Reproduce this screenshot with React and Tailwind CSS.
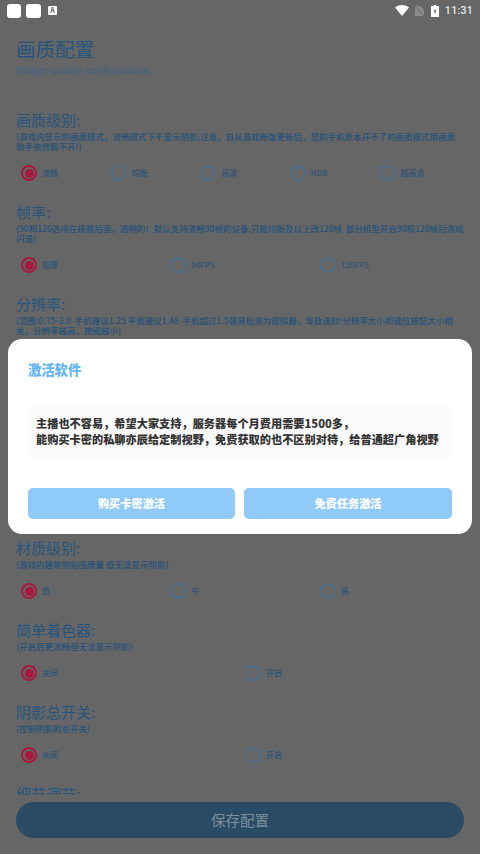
import React from 'react';

const sections = [
  {
    title: '画质级别:',
    desc: '(游戏内显示的画质模式，流畅模式下不显示阴影;注意，自从游戏新版更新后，您的手机原本开不了的画质模式用画质\n助手依然解不开!)',
    options: ['流畅', '均衡', '高清', 'HDR', '超高清'],
    space: 'mt-[31px]',
  },
  {
    title: '帧率:',
    desc: '(90和120选项在极限后面，透明的！默认支持流畅90帧的设备,只能均衡及以上改120帧  部分机型开启90和120帧后游戏闪退)',
    options: ['极限', '90FPS', '120FPS'],
    space: 'mt-[19px]',
  },
  {
    title: '分辨率:',
    desc: '(范围:0.75-3.0  手机建议1.25 平板建议1.48  手机超过1.5容易检测为模拟器，导致误封!分辨率大小和键位按钮大小相\n关，分辨率越高，按键越小)',
    options: [],
    space: 'mt-[19px]',
  },
  {
    title: '材质级别:',
    desc: '(游戏内建筑物贴图质量 低无法显示阴影)',
    options: ['低', '中', '高'],
    space: 'mt-[202px]',
  },
  {
    title: '简单着色器:',
    desc: '(开启后更流畅但无法显示阴影)',
    options: ['关闭', '开启'],
    space: 'mt-[19px]',
  },
  {
    title: '阴影总开关:',
    desc: '(控制阴影的总开关)',
    options: ['关闭', '开启'],
    space: 'mt-[19px]',
  },
];

const Radio = ({ label, checked }) => (
  <div className="flex flex-1 items-center pl-[5px]">
    {checked ? (
      <span className="flex h-4 w-4 items-center justify-center rounded-full border-2 border-[#a8193f]">
        <span className="h-[9px] w-[9px] rounded-full bg-[#a8193f]" />
      </span>
    ) : (
      <span className="h-4 w-4 rounded-full border-2 border-[#4f6c84]" />
    )}
    <span className="ml-[5px] text-[8px] font-medium leading-4 text-[#2c5479]">{label}</span>
  </div>
);

const Section = ({ title, desc, options, space }) => (
  <section className={space}>
    <h2 className="text-[15px] leading-[22px] text-[#25557f]">{title}</h2>
    <p className="whitespace-pre-wrap text-[8.5px] font-medium leading-[10px] text-[#23527c]">{desc}</p>
    {options.length > 0 && (
      <div className="mt-[13px] flex h-[18px] items-center">
        {options.map((label, idx) => (
          <Radio key={label} label={label} checked={idx === 0} />
        ))}
      </div>
    )}
  </section>
);

const StatusBar = () => (
  <div className="flex h-5 items-center justify-between px-[7px] pt-[1px]">
    <div className="flex items-center">
      <span className="h-[14px] w-[14px] rounded-[3px] bg-white" />
      <span className="ml-[5px] h-[14px] w-[15px] rounded-[3px] bg-white" />
      <span className="ml-[7px] flex h-[9px] w-[9px] items-center justify-center rounded-[1px] bg-white text-[7px] font-bold leading-none text-[#555]">A</span>
    </div>
    <div className="flex items-center">
      <svg width="14" height="11" viewBox="0 0 14 11"><path d="M0 2.5C4-.8 10-.8 14 2.5L7 11z" fill="#fff" /></svg>
      <svg className="ml-[6px]" width="9" height="10" viewBox="0 0 10 11">
        <path d="M0 0h6l4 4v7H0z" fill="#8a8a8a" />
        <path d="M0 0l10 11" stroke="#666" strokeWidth="1" />
      </svg>
      <svg className="ml-[7px]" width="8" height="12" viewBox="0 0 8 12">
        <path d="M2.5 0h3v1H8v11H0V1h2.5z" fill="#fff" />
        <path d="M4.6 3L2.4 6.8h1.4L3.2 9.6 5.6 5.6H4.2z" fill="#666" />
      </svg>
      <span className="ml-[6px] mt-[1px] font-['Roboto',sans-serif] text-[10.5px] font-medium leading-none tracking-[0.3px] text-[#e8e8e8]">11:31</span>
    </div>
  </div>
);

const App = () => {
  return (
    <div className="relative h-[854px] w-[480px] overflow-hidden bg-[#666666] font-['Noto_Sans_CJK_SC','Noto_Sans',sans-serif]">
      <StatusBar />

      <div className="px-4">
        <h1 className="mt-[15px] text-[19.5px] leading-[28px] text-[#25557f]">画质配置</h1>
        <p className="mt-[1px] font-['Roboto',sans-serif] text-[11px] leading-[14px] text-[#3f6485]">Image quality configuration</p>

        {sections.map((s) => (
          <Section key={s.title} {...s} />
        ))}

        <h2 className="mt-[19px] text-[15px] leading-[22px] text-[#25557f]">细节调节:</h2>
      </div>

      {/* pinned save button */}
      <div className="absolute inset-x-0 bottom-0 h-[59px] bg-[#666666] px-4 pt-[7px]">
        <button className="h-9 w-full rounded-[18px] bg-[#294b66] text-[14.5px] leading-[34px] text-[#7f8f9a]">保存配置</button>
      </div>

      {/* activation dialog */}
      <div className="absolute left-2 right-2 top-[339px] h-[195px] rounded-[14px] bg-white px-5 pt-5">
        <h3 className="text-[13.3px] font-black leading-[22px] text-[#64b5f6]">激活软件</h3>
        <div className="mt-[23px] flex h-[54px] flex-col justify-center rounded-lg bg-[#fafafa] px-2">
          <p className="whitespace-nowrap text-[11.2px] font-black leading-4 text-[#333333]">主播也不容易，希望大家支持，服务器每个月费用需要1500多，</p>
          <p className="whitespace-nowrap text-[11.2px] font-black leading-4 text-[#333333]">能购买卡密的私聊亦辰给定制视野，免费获取的也不区别对待，给普通超广角视野</p>
        </div>
        <div className="mt-[30px] flex gap-[9px]">
          <button className="h-[31px] w-[207px] rounded-[5px] bg-[#90caf9] text-[11.2px] font-black text-white">购买卡密激活</button>
          <button className="h-[31px] flex-1 rounded-[5px] bg-[#90caf9] text-[11.2px] font-black text-white">免费任务激活</button>
        </div>
      </div>
    </div>
  );
};

export default App;
